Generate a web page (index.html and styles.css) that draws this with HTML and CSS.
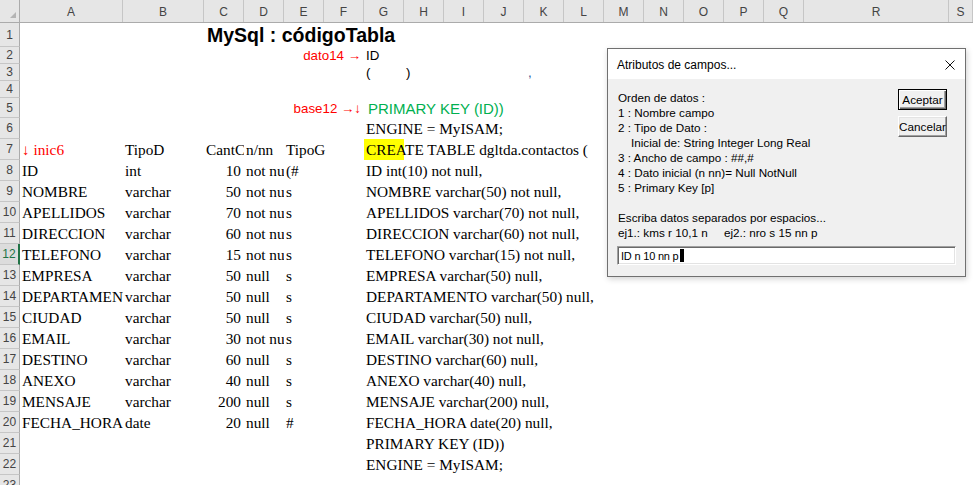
FILE: index.html
```html
<!DOCTYPE html>
<html lang="es">
<head>
  <meta charset="UTF-8" />
  <title>MySql : códigoTabla</title>
  <link rel="stylesheet" href="styles.css">
</head>
<body>
  <div class="page">
    <!-- hoja de cálculo -->
    <div class="sheet">
      <div class="hdr">
        <div class="corner"><span class="tri"></span></div>
        <div>A</div><div>B</div><div>C</div><div>D</div><div>E</div><div>F</div><div>G</div>
        <div>H</div><div>I</div><div>J</div><div>K</div><div>L</div><div>M</div><div>N</div>
        <div>O</div><div>P</div><div>Q</div><div>R</div><div>S</div>
      </div>

      <div class="row h24"><div class="num">1</div><div class="cell cC title">MySql : códigoTabla</div></div>
      <div class="row h17"><div class="num">2</div><div class="cell cF sans red right">dato14 →</div><div class="cell cG sans">ID</div></div>
      <div class="row h17"><div class="num">3</div><div class="cell cG sans">(</div><div class="cell cH sans">)</div><div class="cell cK comma">,</div></div>
      <div class="row h17"><div class="num">4</div></div>
      <div class="row h20"><div class="num">5</div><div class="cell cF sans red right">base12 →↓</div><div class="cell cG pk">PRIMARY KEY (ID))</div></div>
      <div class="row"><div class="num">6</div><div class="cell cG">ENGINE = MyISAM;</div></div>
      <div class="row">
        <div class="num">7</div>
        <div class="cell cA red">↓ inic6</div>
        <div class="cell cB">TipoD</div>
        <div class="cell cC clip">CantCampo</div>
        <div class="cell cD">n/nn</div>
        <div class="cell cE">TipoG</div>
        <div class="cell cG hl">CREATE TABLE dgltda.contactos (</div>
      </div>
      <div class="row"><div class="num">8</div><div class="cell cA clip">ID</div><div class="cell cB">int</div><div class="cell cC right">10</div><div class="cell cD clip">not null</div><div class="cell cE">(#</div><div class="cell cG">ID int(10) not null,</div></div>
      <div class="row"><div class="num">9</div><div class="cell cA clip">NOMBRE</div><div class="cell cB">varchar</div><div class="cell cC right">50</div><div class="cell cD clip">not null</div><div class="cell cE">s</div><div class="cell cG">NOMBRE varchar(50) not null,</div></div>
      <div class="row"><div class="num">10</div><div class="cell cA clip">APELLIDOS</div><div class="cell cB">varchar</div><div class="cell cC right">70</div><div class="cell cD clip">not null</div><div class="cell cE">s</div><div class="cell cG">APELLIDOS varchar(70) not null,</div></div>
      <div class="row"><div class="num">11</div><div class="cell cA clip">DIRECCION</div><div class="cell cB">varchar</div><div class="cell cC right">60</div><div class="cell cD clip">not null</div><div class="cell cE">s</div><div class="cell cG">DIRECCION varchar(60) not null,</div></div>
      <div class="row"><div class="num sel">12</div><div class="cell cA clip">TELEFONO</div><div class="cell cB">varchar</div><div class="cell cC right">15</div><div class="cell cD clip">not null</div><div class="cell cE">s</div><div class="cell cG">TELEFONO varchar(15) not null,</div></div>
      <div class="row"><div class="num">13</div><div class="cell cA clip">EMPRESA</div><div class="cell cB">varchar</div><div class="cell cC right">50</div><div class="cell cD clip">null</div><div class="cell cE">s</div><div class="cell cG">EMPRESA varchar(50) null,</div></div>
      <div class="row"><div class="num">14</div><div class="cell cA clip">DEPARTAMENTO</div><div class="cell cB">varchar</div><div class="cell cC right">50</div><div class="cell cD clip">null</div><div class="cell cE">s</div><div class="cell cG">DEPARTAMENTO varchar(50) null,</div></div>
      <div class="row"><div class="num">15</div><div class="cell cA clip">CIUDAD</div><div class="cell cB">varchar</div><div class="cell cC right">50</div><div class="cell cD clip">null</div><div class="cell cE">s</div><div class="cell cG">CIUDAD varchar(50) null,</div></div>
      <div class="row"><div class="num">16</div><div class="cell cA clip">EMAIL</div><div class="cell cB">varchar</div><div class="cell cC right">30</div><div class="cell cD clip">not null</div><div class="cell cE">s</div><div class="cell cG">EMAIL varchar(30) not null,</div></div>
      <div class="row"><div class="num">17</div><div class="cell cA clip">DESTINO</div><div class="cell cB">varchar</div><div class="cell cC right">60</div><div class="cell cD clip">null</div><div class="cell cE">s</div><div class="cell cG">DESTINO varchar(60) null,</div></div>
      <div class="row"><div class="num">18</div><div class="cell cA clip">ANEXO</div><div class="cell cB">varchar</div><div class="cell cC right">40</div><div class="cell cD clip">null</div><div class="cell cE">s</div><div class="cell cG">ANEXO varchar(40) null,</div></div>
      <div class="row"><div class="num">19</div><div class="cell cA clip">MENSAJE</div><div class="cell cB">varchar</div><div class="cell cC right">200</div><div class="cell cD clip">null</div><div class="cell cE">s</div><div class="cell cG">MENSAJE varchar(200) null,</div></div>
      <div class="row"><div class="num">20</div><div class="cell cA clip">FECHA_HORA</div><div class="cell cB">date</div><div class="cell cC right">20</div><div class="cell cD clip">null</div><div class="cell cE">#</div><div class="cell cG">FECHA_HORA date(20) null,</div></div>
      <div class="row"><div class="num">21</div><div class="cell cG">PRIMARY KEY (ID))</div></div>
      <div class="row"><div class="num">22</div><div class="cell cG">ENGINE = MyISAM;</div></div>
      <div class="row"><div class="num">23</div></div>
    </div>

    <!-- dialogo InputBox -->
    <div class="dialog">
      <div class="dlg-title">
        <span>Atributos de campos...</span>
        <svg class="close" width="10" height="10" viewBox="0 0 10 10">
          <path d="M0.5 0.5 L9.5 9.5 M9.5 0.5 L0.5 9.5" stroke="#111" stroke-width="1" fill="none" />
        </svg>
      </div>
      <div class="dlg-body">
        <div class="dlg-top">
          <div class="prompt">Orden de datos :
1 : Nombre campo
2 : Tipo de Dato :
    Inicial de: String Integer Long Real
3 : Ancho de campo : ##,#
4 : Dato inicial (n nn)= Null NotNull
5 : Primary Key [p]

Escriba datos separados por espacios...
ej1.: kms r 10,1 n     ej2.: nro s 15 nn p</div>
          <div class="buttons">
            <div class="btn dflt">Aceptar</div>
            <div class="btn">Cancelar</div>
          </div>
        </div>
        <div class="field">ID n 10 nn p<span class="caret"></span></div>
      </div>
    </div>
  </div>
</body>
</html>
```

FILE: styles.css
```css
body {
  margin: 0;
  background: #fff;
  font-family: "Liberation Serif", "Times New Roman", serif;
}

.page {
  position: relative;
  width: 973px;
  height: 485px;
  overflow: hidden;
}

/* grid of the sheet: row header, A, B, C..Q, R, S */
.hdr,
.row {
  display: grid;
  grid-template-columns: 20px 103px 81px repeat(15, 40px) 145px 1fr;
}

.hdr {
  height: 22px;
  background: #e6e6e6;
  border-bottom: 1px solid #ababab;
  font: 12px "Liberation Sans", Arial, sans-serif;
  color: #444;
}

.hdr > div {
  display: flex;
  align-items: center;
  justify-content: center;
  border-right: 1px solid #c6c6c6;
  padding-top: 1px;
}

.hdr > .corner {
  position: relative;
  border-right: 1px solid #ababab;
}

.tri {
  position: absolute;
  right: 3px;
  bottom: 4px;
  width: 0;
  height: 0;
  border-left: 6px solid transparent;
  border-bottom: 6px solid #b4b4b4;
}

.row {
  height: 21px;
}
.row.h24 { height: 24px; }
.row.h20 { height: 20px; }
.row.h17 { height: 17px; }

.row > div {
  grid-row: 1;
}

.num {
  grid-column: 1;
  background: #e6e6e6;
  border-right: 1px solid #ababab;
  border-bottom: 1px solid #c6c6c6;
  box-sizing: border-box;
  font: 12px "Liberation Sans", Arial, sans-serif;
  color: #444;
  display: flex;
  align-items: center;
  justify-content: center;
}

.num.sel {
  background: #dcdcdc;
  color: #217346;
  border-right: 2px solid #217346;
}

.cell {
  display: flex;
  align-items: center;
  padding: 0 3px 0 2px;
  white-space: nowrap;
  font-size: 15.3px;
  color: #000;
  min-width: 0;
}

.cA { grid-column: 2; }
.cB { grid-column: 3; }
.cC { grid-column: 4; }
.cD { grid-column: 5; }
.cE { grid-column: 6; }
.cF { grid-column: 7; }
.cG { grid-column: 8; }
.cH { grid-column: 9; }
.cK { grid-column: 12; }

.clip { overflow: hidden; }
.right { justify-content: flex-end; }

.sans {
  font-family: "Liberation Sans", Arial, sans-serif;
  font-size: 13.33px;
}

.title {
  font-family: "Liberation Sans", Arial, sans-serif;
  font-weight: bold;
  font-size: 19.5px;
  padding-left: 3px;
}

.red { color: #ff0000; }

.pk {
  font-family: "Liberation Sans", Arial, sans-serif;
  font-size: 15px;
  color: #00b050;
  padding-left: 4px;
}

.comma {
  font-family: "Liberation Sans", Arial, sans-serif;
  font-size: 13.33px;
  color: #2f5597;
  padding-left: 4px;
}

.hl { background: #ffff00; }

/* dialog */
.dialog {
  position: absolute;
  left: 607px;
  top: 48px;
  width: 359px;
  height: 229px;
  box-sizing: border-box;
  border: 1px solid #707070;
  background: #f0f0f0;
  box-shadow: 1px 2px 6px rgba(0, 0, 0, 0.18);
  font-family: "Liberation Sans", Arial, sans-serif;
  color: #000;
}

.dlg-title {
  height: 30px;
  background: #fff;
  display: flex;
  align-items: center;
  justify-content: space-between;
  padding: 2px 10px 0 9px;
  box-sizing: border-box;
  font-size: 12px;
}

.close {
  display: block;
  margin-top: -1px;
}

.dlg-body {
  padding: 10px 9px 9px 9px;
}

.dlg-top {
  display: flex;
  justify-content: space-between;
}

.prompt {
  white-space: pre;
  font-size: 11.7px;
  line-height: 15px;
  padding: 1px 0 0 1px;
}

.buttons {
  display: flex;
  flex-direction: column;
  gap: 6px;
  margin-right: 9px;
}

.btn {
  width: 49px;
  height: 21px;
  box-sizing: border-box;
  background: #f0f0f0;
  border: 1px solid;
  border-color: #fff #696969 #696969 #fff;
  box-shadow: inset -1px -1px #a0a0a0, inset 1px 1px #e3e3e3;
  display: flex;
  align-items: center;
  justify-content: center;
  font-size: 11.7px;
}

.btn.dflt {
  border: 1px solid #000;
  box-shadow: inset 1px 1px #fff, inset -1px -1px #696969, inset -2px -2px #a0a0a0;
}

.field {
  margin-top: 6px;
  height: 19px;
  box-sizing: border-box;
  background: #fff;
  border: 1px solid;
  border-color: #a0a0a0 #fff #fff #a0a0a0;
  box-shadow: inset 1px 1px #696969, inset -1px -1px #e3e3e3;
  padding: 0 0 0 3px;
  display: flex;
  align-items: center;
  font-size: 11px;
  letter-spacing: -0.2px;
}

.caret {
  display: inline-block;
  width: 4px;
  height: 13px;
  background: #000;
  margin-left: 1px;
}
```
